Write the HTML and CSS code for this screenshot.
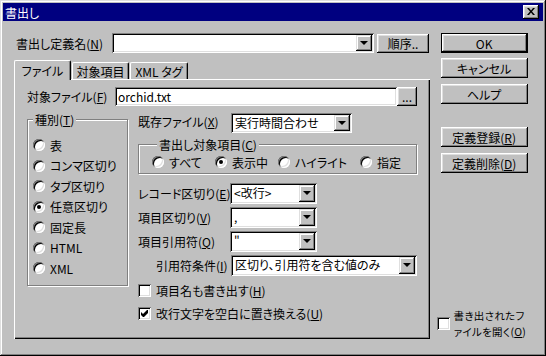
FILE: index.html
```html
<!DOCTYPE html>
<html lang="ja">
<head>
    <meta charset="UTF-8">
    <title>書出し</title>
    <link rel="stylesheet" href="styles.css">
</head>
<body>
<div class="window">
    <div class="titlebar">
        <span class="title">書出し</span>
        <button class="close-btn">
            <svg width="8" height="7" viewBox="0 0 8 7"><path d="M0 0h2l2 2.5L6 0h2L5 3.5 8 7H6L4 4.5 2 7H0l3-3.5z"/></svg>
        </button>
    </div>
    <div class="client">
        <div class="main">
            <div class="name-row">
                <label class="name-label">書出し定義名(<u>N</u>)</label>
                <div class="combo name-combo"><span class="combo-text"></span><span class="drop"></span></div>
                <button class="btn order-btn">順序..</button>
            </div>
            <div class="tabs">
                <div class="tab active">ファイル</div>
                <div class="tab">対象項目</div>
                <div class="tab tab-xml">XML タグ</div>
            </div>
            <div class="panel">
                <div class="file-row">
                    <label class="file-label">対象ファイル(<u>F</u>)</label>
                    <div class="field file-field">orchid.txt</div>
                    <button class="btn browse-btn">...</button>
                </div>
                <div class="cols">
                    <fieldset class="group kind-group">
                        <legend>種別(<u>T</u>)</legend>
                        <div class="radio-list">
                            <div class="radio-row"><span class="radio"></span>表</div>
                            <div class="radio-row"><span class="radio"></span>コンマ区切り</div>
                            <div class="radio-row"><span class="radio"></span>タブ区切り</div>
                            <div class="radio-row"><span class="radio on"></span>任意区切り</div>
                            <div class="radio-row"><span class="radio"></span>固定長</div>
                            <div class="radio-row"><span class="radio"></span>HTML</div>
                            <div class="radio-row"><span class="radio"></span>XML</div>
                        </div>
                    </fieldset>
                    <div class="right">
                        <div class="exist-row">
                            <label class="exist-label">既存ファイル(<u>X</u>)</label>
                            <div class="combo exist-combo"><span class="combo-text">実行時間合わせ</span><span class="drop"></span></div>
                        </div>
                        <fieldset class="group target-group">
                            <legend>書出し対象項目(<u>C</u>)</legend>
                            <div class="target-row">
                                <div class="radio-row item-all"><span class="radio"></span>すべて</div>
                                <div class="radio-row item-shown"><span class="radio on"></span>表示中</div>
                                <div class="radio-row item-hl"><span class="radio"></span>ハイライト</div>
                                <div class="radio-row"><span class="radio"></span>指定</div>
                            </div>
                        </fieldset>
                        <div class="combo-rows">
                            <div class="combo-row">
                                <label class="row-label">レコード区切り(<u>E</u>)</label>
                                <div class="combo small-combo"><span class="combo-text">&lt;改行&gt;</span><span class="drop"></span></div>
                            </div>
                            <div class="combo-row">
                                <label class="row-label">項目区切り(<u>V</u>)</label>
                                <div class="combo small-combo"><span class="combo-text">,</span><span class="drop"></span></div>
                            </div>
                            <div class="combo-row">
                                <label class="row-label">項目引用符(<u>Q</u>)</label>
                                <div class="combo small-combo"><span class="combo-text">"</span><span class="drop"></span></div>
                            </div>
                            <div class="combo-row">
                                <label class="row-label indent">引用符条件(<u>I</u>)</label>
                                <div class="combo wide-combo"><span class="combo-text">区切り、引用符を含む値のみ</span><span class="drop"></span></div>
                            </div>
                        </div>
                        <div class="check-row first">
                            <span class="check"></span>項目名も書き出す(<u>H</u>)
                        </div>
                        <div class="check-row second">
                            <span class="check on">
                                <svg width="7" height="7" viewBox="0 0 7 7"><path d="M0 2l2 2 4-4h1v3L3 7H2L0 5z"/></svg>
                            </span>改行文字を空白に置き換える(<u>U</u>)
                        </div>
                    </div>
                </div>
            </div>
        </div>
        <div class="side">
            <button class="btn side-btn default">OK</button>
            <button class="btn side-btn cancel">キャンセル</button>
            <button class="btn side-btn help">ヘルプ</button>
            <button class="btn side-btn register">定義登録(<u>R</u>)</button>
            <button class="btn side-btn delete">定義削除(<u>D</u>)</button>
            <div class="open-row">
                <span class="check"></span>
                <span class="open-text">
                    <span class="open-line">書き出されたフ</span>
                    <span class="open-line">ァイルを開く(<u>O</u>)</span>
                </span>
            </div>
        </div>
    </div>
</div>
</body>
</html>
```

FILE: styles.css
```css
* {
    box-sizing: border-box;
}
body {
    margin: 0;
    background-color: #c0c0c0;
    font-family: "Noto Sans CJK JP", "Liberation Sans", sans-serif;
    font-size: 12px;
    line-height: 13px;
    font-feature-settings: "palt";
    color: #000;
}
u {
    text-underline-offset: 1px;
}
.window {
    width: 546px;
    height: 356px;
    padding: 3px;
    background-color: #c0c0c0;
    box-shadow: inset -1px -1px #000, inset 1px 1px #dfdfdf, inset -2px -2px #808080, inset 2px 2px #fff;
}
.titlebar {
    display: flex;
    align-items: center;
    justify-content: space-between;
    height: 18px;
    padding: 0 4px 0 2px;
    background-color: #000080;
    color: #fff;
}
.btn,
.close-btn {
    border: none;
    padding: 0;
    margin: 0;
    font: inherit;
    color: #000;
    background-color: #c0c0c0;
    box-shadow: inset -1px -1px #000, inset 1px 1px #fff, inset -2px -2px #808080, inset 2px 2px #dfdfdf;
}
.close-btn {
    display: flex;
    align-items: center;
    justify-content: center;
    width: 16px;
    height: 14px;
    padding: 0 1px 1px 0;
}
.client {
    display: flex;
}
.main {
    width: 433px;
}
.name-row {
    display: flex;
    align-items: center;
    height: 20px;
    margin-top: 12px;
}
.name-label {
    width: 109px;
    padding-left: 13px;
}
.combo {
    display: flex;
    height: 20px;
    padding: 2px;
    background-color: #fff;
    box-shadow: inset 1px 1px #808080, inset -1px -1px #fff, inset 2px 2px #000, inset -2px -2px #dfdfdf;
}
.combo-text {
    flex: 1;
    padding-left: 2px;
    line-height: 16px;
    white-space: nowrap;
    overflow: hidden;
}
.drop {
    display: flex;
    align-items: center;
    justify-content: center;
    width: 16px;
    height: 16px;
    background-color: #c0c0c0;
    box-shadow: inset -1px -1px #000, inset 1px 1px #dfdfdf, inset -2px -2px #808080, inset 2px 2px #fff;
}
.drop::after {
    content: "";
    width: 0;
    height: 0;
    margin: 0 1px 1px 0;
    border-left: 4px solid transparent;
    border-right: 4px solid transparent;
    border-top: 4px solid #000;
}
.name-combo {
    width: 262px;
}
.order-btn {
    width: 52px;
    height: 19px;
    margin-left: 3px;
}
.tabs {
    display: flex;
    align-items: flex-end;
    height: 19px;
    margin: 7px 0 0 11px;
}
.tab {
    width: 57px;
    height: 17px;
    margin-left: 1px;
    padding-top: 2px;
    text-align: center;
    background-color: #c0c0c0;
    border-top: 1px solid #fff;
    border-left: 1px solid #fff;
    border-right: 1px solid #000;
    border-radius: 2px 2px 0 0;
    box-shadow: inset -1px 0 #808080;
}
.tab.active {
    position: relative;
    z-index: 1;
    height: 20px;
    margin-left: 0;
    margin-bottom: -1px;
    padding-top: 3px;
}
.tab-xml {
    width: 58px;
}
.panel {
    width: 416px;
    height: 260px;
    margin-left: 11px;
    padding: 8px 0 0 13px;
    box-shadow: inset 1px 1px #fff, inset -1px -1px #000, inset -2px -2px #808080;
}
.file-row {
    display: flex;
    align-items: center;
    height: 19px;
}
.file-label {
    width: 88px;
}
.field {
    height: 19px;
    padding: 2px 3px;
    line-height: 15px;
    background-color: #fff;
    box-shadow: inset 1px 1px #808080, inset -1px -1px #fff, inset 2px 2px #000, inset -2px -2px #dfdfdf;
}
.file-field {
    width: 282px;
}
.browse-btn {
    width: 20px;
    height: 19px;
    line-height: 12px;
}
.cols {
    display: flex;
    margin-top: 7px;
}
.group {
    margin: 0;
    padding: 0;
    min-width: 0;
    border: 1px solid #808080;
    box-shadow: inset 1px 1px #fff, 1px 1px #fff;
}
.group legend {
    margin-left: 5px;
    padding: 0 2px;
    line-height: 13px;
    background-color: #c0c0c0;
}
.kind-group {
    width: 101px;
    height: 173px;
    margin-right: 10px;
}
.radio-list {
    padding: 9px 0 0 5px;
}
.radio-row {
    display: flex;
    align-items: center;
    gap: 5px;
    height: 20.5px;
    white-space: nowrap;
}
.radio {
    display: flex;
    align-items: center;
    justify-content: center;
    flex: none;
    width: 12px;
    height: 12px;
    border-radius: 50%;
    background-color: #fff;
    box-shadow: inset 1px 1px #808080, inset -1px -1px #fff, inset 2px 2px #000, inset -2px -2px #dfdfdf;
}
.radio.on::after {
    content: "";
    width: 4px;
    height: 4px;
    border-radius: 50%;
    background-color: #000;
}
.right {
    width: 279px;
}
.exist-row {
    display: flex;
    align-items: center;
    height: 20px;
}
.exist-label {
    width: 93px;
    padding-bottom: 3px;
}
.exist-combo {
    width: 121px;
}
.target-group {
    width: 279px;
    margin-top: 5px;
    padding: 0 0 3px 13px;
}
.target-row {
    display: flex;
    height: 16px;
    margin-top: 3px;
}
.target-row .radio-row {
    height: 16px;
}
.item-all,
.item-shown {
    width: 63px;
}
.item-hl {
    width: 82px;
}
.combo-rows {
    display: flex;
    flex-direction: column;
    gap: 3px;
    margin-top: 9px;
}
.combo-row {
    display: flex;
    align-items: center;
    height: 21px;
}
.combo-row .combo {
    height: 21px;
}
.combo-row .drop {
    height: 17px;
}
.row-label {
    width: 92px;
    white-space: nowrap;
}
.row-label.indent {
    width: 93px;
    padding-left: 18px;
}
.small-combo {
    width: 87px;
}
.wide-combo {
    width: 186px;
}
.check-row {
    display: flex;
    align-items: center;
    height: 13px;
    white-space: nowrap;
}
.check-row.first {
    margin-top: 8px;
}
.check-row.second {
    margin-top: 10px;
}
.check {
    display: flex;
    align-items: center;
    justify-content: center;
    flex: none;
    width: 13px;
    height: 13px;
    margin-right: 5px;
    background-color: #fff;
    box-shadow: inset 1px 1px #808080, inset -1px -1px #fff, inset 2px 2px #000, inset -2px -2px #dfdfdf;
}
.side {
    display: flex;
    flex-direction: column;
    width: 107px;
    margin-left: 3px;
}
.side-btn {
    width: 87px;
    height: 20px;
    margin-left: 4px;
}
.side-btn.default {
    margin-top: 12px;
    box-shadow: inset 0 0 0 1px #000, inset -2px -2px #000, inset 2px 2px #fff, inset -3px -3px #808080, inset 3px 3px #dfdfdf;
}
.side-btn.cancel {
    margin-top: 5px;
}
.side-btn.help {
    margin-top: 6px;
}
.side-btn.register {
    margin-top: 23px;
}
.side-btn.delete {
    margin-top: 6px;
}
.open-row {
    display: flex;
    align-items: center;
    margin-top: 135px;
}
.open-row .check {
    margin-right: 4px;
}
.open-text {
    display: flex;
    flex-direction: column;
    font-size: 10.5px;
    letter-spacing: 0.3px;
}
.open-line {
    height: 15.5px;
    line-height: 15.5px;
    white-space: nowrap;
}
```
